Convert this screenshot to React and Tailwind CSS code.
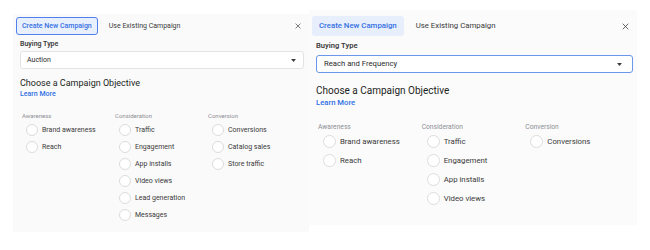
import React from "react";

const leftCols = [
  { title: "Awareness", items: ["Brand awareness", "Reach"] },
  {
    title: "Consideration",
    items: ["Traffic", "Engagement", "App installs", "Video views", "Lead generation", "Messages"],
  },
  { title: "Conversion", items: ["Conversions", "Catalog sales", "Store traffic"] },
];

const rightCols = [
  { title: "Awareness", items: ["Brand awareness", "Reach"] },
  { title: "Consideration", items: ["Traffic", "Engagement", "App installs", "Video views"] },
  { title: "Conversion", items: ["Conversions"] },
];

const CloseIcon = ({ size }) => (
  <svg width={size} height={size} viewBox="0 0 10 10" fill="none" stroke="#3a3a3a" strokeWidth="1.1">
    <path d="M1 1 L9 9 M9 1 L1 9" />
  </svg>
);

const Caret = () => (
  <svg width="5" height="3" viewBox="0 0 8 5">
    <path d="M0 0 H8 L4 5 Z" fill="#3a3a3a" />
  </svg>
);

const App = () => {
  return (
    <div
      className="w-[650px] h-[250px] bg-white flex items-start overflow-hidden"
      style={{ fontFamily: "Roboto, 'Liberation Sans', sans-serif" }}
    >
      {/* left panel */}
      <div className="ml-[13px] mt-[14px] w-[296px] h-[218px] bg-[#fafafa] pl-[7px] pr-[8px] pt-[3px]">
        <div className="flex items-center -ml-[4px] h-[18px]">
          <div className="h-[18px] px-[5px] flex items-center border border-[#4f80ee] rounded-[3px] bg-[#e9f0fd] text-[#3570e3] text-[7px] font-medium">
            Create New Campaign
          </div>
          <div className="ml-[11px] text-[7px] text-[#3a3a3a]">Use Existing Campaign</div>
          <div className="ml-auto flex items-center">
            <CloseIcon size={6} />
          </div>
        </div>
        <div className="mt-[4px] text-[7px] font-semibold text-[#3a3a3a] leading-[10px]">Buying Type</div>
        <div className="mt-[2px] w-[284px] h-[18px] border border-[#e3e3e3] bg-white rounded-[3px] flex items-center pl-[6px] pr-[7px] text-[7px] text-[#2a2a2a]">
          Auction
          <span className="ml-auto flex">
            <Caret />
          </span>
        </div>
        <div className="mt-[8px] text-[9px] text-[#1c1e21] leading-[12px]">Choose a Campaign Objective</div>
        <div className="text-[7px] font-medium text-[#2f6fe4] leading-[10px]">Learn More</div>
        <div className="flex mt-[13px] ml-[2px]">
          {leftCols.map((col) => (
            <div key={col.title} className="w-[95px]">
              <div className="text-[6px] text-[#8d9095] leading-[8px]">{col.title}</div>
              <div className="flex flex-col gap-[5px] mt-[4px] ml-[4px]">
                {col.items.map((item) => (
                  <div key={item} className="flex items-center h-[12px]">
                    <span className="w-[12px] h-[12px] rounded-full border border-[#dcdcdc] bg-white"></span>
                    <span className="ml-[4px] text-[7px] text-[#3a3a3a]">{item}</span>
                  </div>
                ))}
              </div>
            </div>
          ))}
        </div>
      </div>

      {/* right panel */}
      <div className="mt-[10px] w-[328px] h-[215px] bg-[#fbfbfb] pl-[7px] pr-[8px] pt-[6px]">
        <div className="flex items-center -ml-[4px] h-[20px]">
          <div className="h-[20px] px-[7px] flex items-center rounded-[3px] bg-[#e7eefc] text-[#3570e3] text-[7.8px] font-medium">
            Create New Campaign
          </div>
          <div className="ml-[12px] text-[7.8px] text-[#3a3a3a]">Use Existing Campaign</div>
          <div className="ml-auto flex items-center">
            <CloseIcon size={7} />
          </div>
        </div>
        <div className="mt-[5px] text-[7.6px] font-semibold text-[#3a3a3a] leading-[10px]">Buying Type</div>
        <div className="mt-[4px] w-[317px] h-[18px] border border-[#6a96ec] bg-white rounded-[3px] flex items-center pl-[7px] pr-[10px] text-[7.7px] text-[#2a2a2a]">
          Reach and Frequency
          <span className="ml-auto flex">
            <Caret />
          </span>
        </div>
        <div className="mt-[11px] text-[10px] text-[#1c1e21] leading-[14px]">Choose a Campaign Objective</div>
        <div className="text-[7.7px] font-medium text-[#2f6fe4] leading-[10px]">Learn More</div>
        <div className="flex mt-[15px] ml-[2px]">
          {rightCols.map((col) => (
            <div key={col.title} className="w-[105.5px]">
              <div className="text-[6.7px] text-[#8d9095] leading-[8px]">{col.title}</div>
              <div className="flex flex-col gap-[6px] mt-[4px] ml-[5px]">
                {col.items.map((item) => (
                  <div key={item} className="flex items-center h-[13px]">
                    <span className="w-[13px] h-[13px] rounded-full border border-[#dcdcdc] bg-white"></span>
                    <span className="ml-[4px] text-[7.8px] text-[#3a3a3a]">{item}</span>
                  </div>
                ))}
              </div>
            </div>
          ))}
        </div>
      </div>
    </div>
  );
};

export default App;
